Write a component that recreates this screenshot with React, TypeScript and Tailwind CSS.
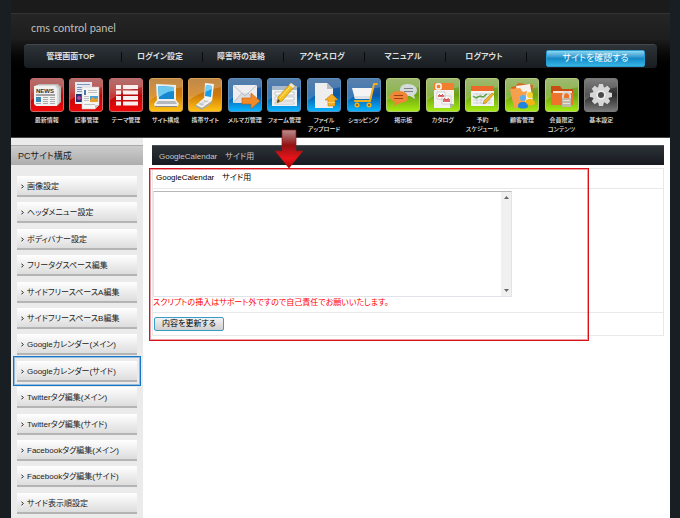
import type { ReactNode } from 'react';

const navItems = ['管理画面TOP', 'ログイン設定', '障害時の連絡', 'アクセスログ', 'マニュアル', 'ログアウト'];

const sideItems = [
  '画像設定',
  'ヘッダメニュー設定',
  'ボディバナー設定',
  'フリータグスペース編集',
  'サイドフリースペースA編集',
  'サイドフリースペースB編集',
  'Googleカレンダー(メイン)',
  'Googleカレンダー(サイド)',
  'Twitterタグ編集(メイン)',
  'Twitterタグ編集(サイド)',
  'Facebookタグ編集(メイン)',
  'Facebookタグ編集(サイド)',
  'サイド表示順設定',
];

const tiles = {
  red: 'border-[#c96a6a] bg-linear-to-b from-[#a04a4a] via-[#b80808] to-[#f00808]',
  orange: 'border-[#d9a055] bg-linear-to-b from-[#b06c1c] via-[#cf7a08] to-[#ffc312]',
  blue: 'border-[#5a8fc0] bg-linear-to-b from-[#2e5f96] via-[#0a58a4] to-[#08b4ff]',
  green: 'border-[#b3cc7c] bg-linear-to-b from-[#86a84c] via-[#6ea212] to-[#a4ea10]',
  gray: 'border-[#777777] bg-linear-to-b from-[#5c5c5c] via-[#2a2a2a] to-[#7a7a7a]',
};

type Tool = { label: string; sub?: string; tile: keyof typeof tiles; icon: ReactNode };

const tools: Tool[] = [
  {
    label: '最新情報',
    tile: 'red',
    icon: (
      <>
        <path d="M8 6h20l3 3v15l-3 3H12z" fill="#b9b9b9" />
        <path d="M6 7h20l3 3v15l-2 3H8l-3-3V9z" fill="#d8d8d8" />
        <path d="M4 8h21l2 3v17H6l-2-2z" fill="#f1f1f1" />
        <text x="6" y="15" fontSize="6" fontWeight="700" fill="#333" fontFamily="Liberation Sans, sans-serif">NEWS</text>
        <path d="M6 17h19" stroke="#555" />
        <path d="M6 19h5v5H6z" fill="#3b86b4" />
        <path d="M13 19.500h5M13 21.500h5M13 23.500h5M13 25.500h5M20 19.500h5M20 21.500h5M20 23.500h5M20 25.500h5M6 25.500h5" stroke="#aaa" />
      </>
    ),
  },
  {
    label: '記事管理',
    tile: 'red',
    icon: (
      <>
        <path d="M6 4h17v22H6z" fill="#e6eaf2" />
        <path d="M8 6.500h13M8 9.500h6M8 11.500h6M8 13.500h6" stroke="#8295bd" />
        <path d="M7 16h6v8H7z" fill="#25316f" />
        <circle cx="10" cy="20" r="2" fill="#b04a9a" />
        <path d="M13 9h17v18l-4 4H13z" fill="#f5f5f3" stroke="#c9c9c9" strokeWidth=".5" />
        <path d="M15 12h2v5h-2z" fill="#47a" />
        <path d="M19 12.500h9M19 14.500h9M15 18.500h5M15 20.500h5M15 22.500h5M15 26.500h11" stroke="#b4b4b4" strokeWidth=".8" />
        <path d="M21 18h8v6h-8z" fill="#4ba1d6" />
        <path d="M21 22l3-3 2 2 3-1v4h-8z" fill="#e7a02b" />
        <path d="M30 27h-4v4z" fill="#c4c4c4" />
      </>
    ),
  },
  {
    label: 'テーマ管理',
    tile: 'red',
    icon: (
      <path d="M7 7h5v4H7zM14 7h15v4H14zM7 12.500h5v4H7zM14 12.500h15v4H14zM7 18h5v4H7zM14 18h15v4H14zM7 23.500h5v4H7zM14 23.500h15v4H14z" fill="#fbeeee" />
    ),
  },
  {
    label: 'サイト構成',
    tile: 'orange',
    icon: (
      <>
        <path d="M7 6l20 1v16H8z" fill="#e9eef1" />
        <path d="M9 8l16 1v12H10z" fill="#1588cf" />
        <path d="M9 8l16 1v4c-6 0-10 3-15 6z" fill="#6cc8ee" />
        <path d="M8 22h19l3 4-2 3H6l-1-3z" fill="#f0f0f0" />
        <path d="M9 23h17l2 3H7z" fill="#b5b9bd" />
        <path d="M6 28.500h22" stroke="#8b8b8b" />
        <path d="M14 26h6v1.500h-6z" fill="#eee" />
      </>
    ),
  },
  {
    label: '携帯サイト',
    tile: 'orange',
    icon: (
      <>
        <path d="M17 5l9 1-2 17-8-1z" fill="#f3f3f3" />
        <path d="M18 7l6 1-1 11-6-1z" fill="#189be6" />
        <path d="M18 7l6 1v3l-7 3z" fill="#74cff8" />
        <path d="M16 20l8 3-10 7-6-3z" fill="#f4f4f4" />
        <path d="M16 22l5 1-7 5-4-2z" fill="#c6cace" />
        <path d="M8 27l6 3 10-7v2l-10 7-6-3z" fill="#a9a9a9" />
        <path d="M12 24l6 2M14 23l5 2" stroke="#fff" strokeWidth=".6" />
      </>
    ),
  },
  {
    label: 'メルマガ管理',
    tile: 'blue',
    icon: (
      <>
        <path d="M5 7h24v18H5z" fill="#eeeef0" />
        <path d="M5 25l9-10h6l9 10z" fill="#dcdde0" />
        <path d="M5 7l12 11L29 7M5 25l9-10M29 25l-9-10" fill="none" stroke="#b2b5bb" strokeWidth=".8" />
        <path d="M14 20h9v-5l9 8-9 8v-5h-9z" fill="#f18a28" stroke="#c65a08" strokeWidth=".6" />
      </>
    ),
  },
  {
    label: 'フォーム管理',
    tile: 'blue',
    icon: (
      <>
        <path d="M5 8h25v20H5z" fill="#eef1f4" />
        <path d="M5 8h25v4H5z" fill="#a8bacb" />
        <path d="M8 14h19v3H8zM8 19h19v3H8zM8 24h19v2H8z" fill="#fff" stroke="#aaa" strokeWidth=".6" />
        <path d="M24 5l4 3-13 15-5 2 1-6z" fill="#f6c01c" stroke="#b77a0a" strokeWidth=".6" />
        <path d="M24 5l4 3-2 2-4-3z" fill="#e7e7e7" />
        <path d="M11 21l2 2-3 2z" fill="#443" />
        <path d="M23 9L13 20" stroke="#ffe782" />
      </>
    ),
  },
  {
    label: 'ファイル',
    sub: 'アップロード',
    tile: 'blue',
    icon: (
      <>
        <path d="M8 5h12l6 6v19H8z" fill="#eeeeee" />
        <path d="M20 5l6 6h-6z" fill="#bcbcbc" />
        <path d="M25 16l6 6h-3v6h-7v-6h-3z" fill="#f6ad24" stroke="#c87b08" strokeWidth=".6" />
        <path d="M21 24.500h7" stroke="#fbd36e" />
      </>
    ),
  },
  {
    label: 'ショッピング',
    tile: 'blue',
    icon: (
      <>
        <path d="M5 10h21l-2 11H8z" fill="#f4f4f4" />
        <path d="M7 18h18l-1 3H8z" fill="#dde1e5" />
        <path d="M30 6h-3l-4 17H8" fill="none" stroke="#eeae22" strokeWidth="2" strokeLinecap="round" />
        <circle cx="10" cy="27" r="2.500" fill="#f1b324" />
        <circle cx="22" cy="27" r="2.500" fill="#f1b324" />
        <circle cx="10" cy="27" r="1" fill="#7c5608" />
        <circle cx="22" cy="27" r="1" fill="#7c5608" />
      </>
    ),
  },
  {
    label: '掲示板',
    tile: 'green',
    icon: (
      <>
        <path d="M22 6c5 0 9 3 9 6 0 2-1 4-3 5l1 4-5-3c-6 0-10-2-10-6s3-6 8-6z" fill="#d5dadd" />
        <path d="M18 10.500h9M18 13.500h9" stroke="#7c8488" />
        <path d="M13 13c6 0 9 3 9 6s-3 6-8 6l-6 3 1-4c-3-1-5-3-5-5 0-3 3-6 9-6z" fill="#f18638" />
        <path d="M8 17.500h9M8 20.500h9" stroke="#9e4210" />
      </>
    ),
  },
  {
    label: 'カタログ',
    tile: 'green',
    icon: (
      <>
        <path d="M8 5h20v21l-4 4H8z" fill="#f4f2ef" />
        <path d="M8 5h20v7H8z" fill="#f0802d" />
        <rect x="10" y="6" width="5" height="5" rx="1" fill="none" stroke="#fff" strokeWidth="1.500" />
        <path d="M11 14h8v7h-8zM16 18h9v8h-9z" fill="#fff" stroke="#b5b5b5" strokeWidth=".6" />
        <path d="M12 17h6v2h-6zM17 21h7v3h-7z" fill="#dc6a6a" />
        <path d="M13 16l2 2 2-2M18 20l2 2 3-2" fill="none" stroke="#c94040" strokeWidth=".8" />
        <path d="M28 26h-4v4z" fill="#aaa" />
      </>
    ),
  },
  {
    label: '予約',
    sub: 'スケジュール',
    tile: 'green',
    icon: (
      <>
        <path d="M6 8h23v20H6z" fill="#f3f3f3" />
        <path d="M6 8h23v5H6z" fill="#ed682b" />
        <path d="M8 16h19M8 19h19M8 22h19M8 25h19M12 15v11M16 15v11M20 15v11M24 15v11" stroke="#c0c5cb" strokeWidth=".6" />
        <path d="M8 18l3 2 4-2 3 1 4-3" fill="none" stroke="#57a53c" strokeWidth="1.500" />
        <path d="M27 15l2 1-8 9-3 1 1-3z" fill="#f4b528" stroke="#a56d12" strokeWidth=".5" />
      </>
    ),
  },
  {
    label: '顧客管理',
    tile: 'green',
    icon: (
      <>
        <path d="M6 9l5-1 2-3 15 2-2 18-14 3z" fill="#d9641c" />
        <path d="M11 8l14-2 3 17-14 3z" fill="#f5f0e9" />
        <path d="M5 11l10-1 3 4 4-1-3 16-10 1z" fill="#f5a04d" />
        <circle cx="25" cy="17" r="3" fill="#fbcf2b" />
        <path d="M20 26c0-4 2-5 5-5s5 2 5 5c-2 2-8 2-10 0z" fill="#f6b414" />
        <circle cx="18" cy="20" r="3" fill="#55aff3" />
        <path d="M13 29c0-4 2-5 5-5s5 2 5 5c-2 2-8 2-10 0z" fill="#1e84dc" />
      </>
    ),
  },
  {
    label: '会員限定',
    sub: 'コンテンツ',
    tile: 'green',
    icon: (
      <>
        <path d="M6 8h9l2 3h11v16H6z" fill="#c94c12" />
        <path d="M8 13h19v4H8z" fill="#f6e4d5" />
        <path d="M6 15h22v12H6z" fill="#ef732a" />
        <path d="M18 21v-3c0-5 7-5 7 0v3" fill="none" stroke="#d7d7d7" strokeWidth="2" />
        <rect x="17" y="20" width="9" height="9" rx="1" fill="#bfb9aa" />
        <path d="M18 22.500h7M18 25.500h7" stroke="#e6e2d6" />
      </>
    ),
  },
  {
    label: '基本設定',
    tile: 'gray',
    icon: (
      <>
        <g fill="#d6d6d6">
          <circle cx="17" cy="17" r="8" />
          <path d="M15 6h4l1 4h-6zM15 28h4l1-4h-6zM6 15v4l4 1v-6zM28 15v4l-4 1v-6z" />
          <path d="M15 6h4l1 4h-6zM15 28h4l1-4h-6zM6 15v4l4 1v-6zM28 15v4l-4 1v-6z" transform="rotate(45 17 17)" />
        </g>
        <circle cx="17" cy="17" r="4.500" fill="#eeeeee" />
        <circle cx="17" cy="17" r="3" fill="#4a4a4a" />
      </>
    ),
  },
];

function ToolButton({ label, sub, tile, icon }: Tool) {
  return (
    <a href="#" className="flex flex-col items-center text-center text-[6px] leading-[9px] font-medium whitespace-nowrap text-[#e8e8e8]">
      <span className={`mb-1 block size-[34px] overflow-hidden rounded-[3px] border ${tiles[tile]}`}>
        <svg viewBox="1 1 32 32" className="size-full">
          <path d="M0 0h34v9C22 11 10 15 0 23z" fill="#fff" opacity=".2" />
          {icon}
        </svg>
      </span>
      <span>{label}</span>
      {sub && <span>{sub}</span>}
    </a>
  );
}

export default function App() {
  return (
    <div className="flex min-h-screen flex-col bg-[#191e22] pr-[10px] pl-[11px] font-['Liberation_Sans','Noto_Sans_CJK_JP',sans-serif] text-[8px] text-[#222] [font-feature-settings:'palt']">
      <header className="h-[138px] border-b border-[#444] bg-black">
        <div className="h-[13px] bg-[#1b1b1b]" />
        <div className="h-[27px] border-t border-[#343434] bg-linear-to-b from-[#252525] to-[#1d1d1d] pl-5 font-[Lato,sans-serif] text-[11px] leading-[27px] text-[#bdbdbd]">
          cms control panel
        </div>
        <div className="bg-linear-to-b from-[#1b1b1b] to-black px-[13px] pt-1 pb-2">
          <nav className="grid h-6 grid-cols-[98fr_81fr_81fr_81fr_81fr_81fr_130fr] items-center rounded-[4px] border-t border-[#41474b] bg-linear-to-b from-[#2d3338] to-[#191d22]">
            {navItems.map((item) => (
              <a key={item} href="#" className="border-r border-[#090b0d] pr-1 text-center text-[8px] leading-[10px] font-bold whitespace-nowrap text-[#dedede]">
                {item}
              </a>
            ))}
            <button className="mt-1 mr-3 ml-[19px] h-[17px] rounded-[2px] border border-[#2a9bd0] bg-linear-to-b from-[#8ad8f0] via-[#1489c6] to-[#35b5e4] text-[9px] leading-[15px] whitespace-nowrap text-white">
              サイトを確認する
            </button>
          </nav>
        </div>
        <div className="grid grid-cols-15 pt-[2px] pr-[49px] pl-4">
          {tools.map((tool) => (
            <ToolButton key={tool.label} {...tool} />
          ))}
        </div>
      </header>

      <div className="flex flex-1 bg-white">
        <aside className="w-[132px] shrink-0 bg-[#ebebeb] pt-[7px]">
          <h2 className="h-5 border-t border-[#aaa] bg-linear-to-b from-[#cccccc] to-[#adadad] pl-[7px] text-[9px] leading-[21px]">PCサイト構成</h2>
          <ul className="mt-[11px] grid h-[338px] content-between px-[6px]">
            {sideItems.map((item) => (
              <li key={item} className="relative">
                <a href="#" className="flex h-[21px] items-center border-b-2 border-[#b4b4b4] bg-linear-to-b from-white to-[#dddddd] pt-[2px] pl-1 text-[8px] leading-[17px] whitespace-nowrap">
                  <svg viewBox="0 0 4 6" className="mr-[3px] h-[5px] w-[3px]">
                    <path d="M.5.5L3 3 .5 5.500" fill="none" stroke="#111" strokeWidth="1.300" />
                  </svg>
                  {item}
                </a>
                {item === 'Googleカレンダー(サイド)' && (
                  <span className="pointer-events-none absolute -inset-x-1 -top-[5px] -bottom-1 border border-[#1676c8] inset-ring inset-ring-[#1676c8]/40" />
                )}
              </li>
            ))}
          </ul>
        </aside>

        <main className="min-w-0 flex-1 pt-[7px] pr-[6px] pl-[9px]">
          <h1 className="h-5 border-t border-[#4c5357] bg-linear-to-b from-[#2c3237] to-[#171a20] pl-[7px] text-[8px] leading-[21px] text-[#c8c8c8]">
            GoogleCalendar　サイド用
          </h1>
          <form className="relative mt-[3px] border border-[#e8e8e8]">
            <label htmlFor="calendar" className="block h-5 border-b border-[#e8e8e8] pl-[3px] text-[8px] leading-[18px] text-black">
              GoogleCalendar　サイド用
            </label>
            <div className="h-[124px] border-b border-[#e8e8e8] pt-[2px]">
              <div className="relative h-[106px] w-[359px]">
                <textarea id="calendar" className="block size-full resize-none overflow-hidden border border-[#e2e3ea] border-t-[#b8b8b8] outline-none" />
                <div className="absolute top-px right-px bottom-px flex w-[10px] flex-col items-center justify-between bg-[#f0f0f0] py-1">
                  <svg viewBox="0 0 5 3" className="h-[3px] w-[5px]">
                    <path d="M0 3l2.500-3L5 3z" fill="#666" />
                  </svg>
                  <svg viewBox="0 0 5 3" className="h-[3px] w-[5px]">
                    <path d="M0 0l2.500 3L5 0z" fill="#666" />
                  </svg>
                </div>
              </div>
              <p className="leading-[12px] whitespace-nowrap text-[#f00]">スクリプトの挿入はサポート外ですので自己責任でお願いいたします。</p>
            </div>
            <div className="flex h-[22px] items-center pl-px">
              <button type="button" className="h-[14px] w-[70px] rounded-[2px] border border-[#3c9cc8] bg-linear-to-b from-[#f2f2f2] to-[#cfcfcf] text-[8px] leading-[12px] text-black">
                内容を更新する
              </button>
            </div>
            <span className="pointer-events-none absolute -top-px -left-1 h-[173px] w-[440px] border border-[#d8101a] inset-ring inset-ring-[#d8101a]/40" />
            <svg viewBox="0 0 30 40" className="pointer-events-none absolute -top-10 left-[121px] h-10 w-[30px]">
              <defs>
                <linearGradient id="arrow" x1="0" y1="0" x2="0" y2="1">
                  <stop offset="0" stopColor="#b89090" />
                  <stop offset=".4" stopColor="#921212" />
                  <stop offset=".75" stopColor="#e8141a" />
                  <stop offset="1" stopColor="#a00" />
                </linearGradient>
              </defs>
              <path d="M8 1h14v21h7L15 39 1 22h7z" fill="url(#arrow)" stroke="#901818" strokeWidth=".7" />
            </svg>
          </form>
        </main>
      </div>
    </div>
  );
}
